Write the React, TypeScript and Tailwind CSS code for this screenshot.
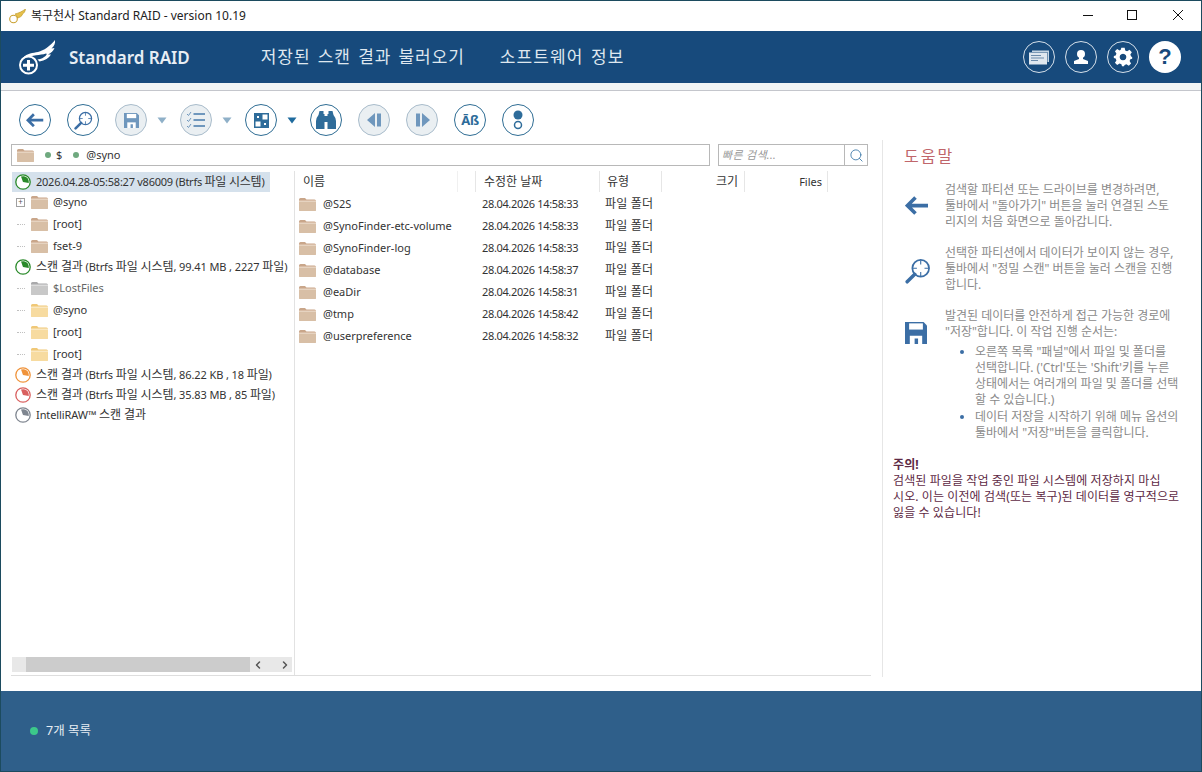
import React from "react";
import { Search, ChevronLeft, ChevronRight } from "lucide-react";

const font = { fontFamily: '"Noto Sans", "Noto Sans CJK KR", sans-serif' };

// hangul runs sit a little larger than the latin around them
const K = ({ children }: { children: React.ReactNode }) => (
  <span className="text-[12px]">{children}</span>
);

const Folder = ({ tone = "brown" }: { tone?: "brown" | "yellow" | "grey" }) => {
  const colors = {
    brown: ["#d8bfa6", "#c9a68a", "#e6d3c0"],
    yellow: ["#f7dba0", "#f0c877", "#fae8c2"],
    grey: ["#c8c8c8", "#a9a9ab", "#dcdcdc"],
  }[tone];
  return (
    <svg width="17" height="14" viewBox="0 0 17 14" className="shrink-0">
      <path d="M0 2.5Q0 1 1.5 1H6L7.5 2.5H15.5Q17 2.5 17 4V12.5Q17 14 15.5 14H1.5Q0 14 0 12.5Z" fill={colors[1]} />
      <path d="M0 4.5H17V12.5Q17 14 15.5 14H1.5Q0 14 0 12.5Z" fill={colors[0]} />
      <path d="M0 3.5H17V5H0Z" fill={colors[2]} />
    </svg>
  );
};

const Pie = ({ color }: { color: string }) => (
  <svg width="16" height="16" viewBox="0 0 16 16" className="shrink-0">
    <circle cx="8" cy="8" r="7.2" fill="#fff" stroke={color} strokeWidth="1.3" />
    <path d="M8 8L6 2.55A5.8 5.8 0 0 1 13.7 9Z" fill={color} />
  </svg>
);

const TreeFolder = ({ label, tone, expand }: { label: string; tone?: "brown" | "yellow" | "grey"; expand?: boolean }) => (
  <div className="h-[22px] flex items-center">
    {expand ? (
      <span className="ml-[4px] mr-[1px] w-[9px] h-[9px] border border-[#a0a0a0] flex items-center justify-center text-[8px] leading-none text-[#555555] shrink-0">+</span>
    ) : (
      <span className="ml-[5px] mr-[1px] w-[8px] shrink-0 border-t border-dotted border-[#c0c0c0]" />
    )}
    <span className="ml-[5px]"><Folder tone={tone} /></span>
    <span className={`ml-[5px] ${tone === "grey" ? "text-[#666666]" : "text-[#333333]"}`}>{label}</span>
  </div>
);

const ScanRow = ({ color, children }: { color: string; children: React.ReactNode }) => (
  <div className="h-[20px] flex items-center pl-[3px] whitespace-nowrap text-[#333333]">
    <Pie color={color} />
    <span className="ml-[5px] tracking-[-0.1px]">{children}</span>
  </div>
);

// toolbar button: white circle with a blue ring, greyed when the action is off
const ToolBtn = ({ off, children }: { off?: boolean; children: React.ReactNode }) => (
  <div
    className={`w-[32px] h-[32px] rounded-full border-[1.5px] flex items-center justify-center shrink-0 ${
      off ? "border-[#a9bccb] bg-[#eaeff2]" : "border-[#2f6d94] bg-white"
    }`}
  >
    {children}
  </div>
);

const Caret = ({ off }: { off?: boolean }) => (
  <svg width="10" height="7" viewBox="0 0 10 7" className="shrink-0 mx-[10px]">
    <path d="M0.5 0.5H9.5L5 6.5Z" fill={off ? "#8fb0c8" : "#1f6b9e"} />
  </svg>
);

const BackArrow = ({ size = 18 }: { size?: number }) => (
  <svg width={size} height={size * 0.8} viewBox="0 0 24 19">
    <path d="M10.5 1.5L2.5 9.5L10.5 17.5M3.5 9.5H23" fill="none" stroke="#3b6ea5" strokeWidth="3.6" strokeLinejoin="miter" />
  </svg>
);

const Magnifier = ({ size = 20, color = "#3b6ea5" }: { size?: number; color?: string }) => (
  <svg width={size} height={size} viewBox="0 0 24 24">
    <circle cx="14.5" cy="9.5" r="7.7" fill="#fff" stroke={color} strokeWidth="1.6" />
    <path d="M14.5 2V6M14.5 13V17M7 9.5H11M18 9.5H22" stroke={color} strokeWidth="1" />
    <path d="M9 15L2 22" stroke={color} strokeWidth="3.2" strokeLinecap="round" />
  </svg>
);

const Floppy = ({ size = 16, color = "#6f97bd" }: { size?: number; color?: string }) => (
  <svg width={size} height={size} viewBox="0 0 16 16">
    <path d="M0 0H13.5L16 2.5V16H0Z" fill={color} />
    <rect x="3" y="1" width="10" height="4.5" fill="#fff" />
    <rect x="3.5" y="10" width="9" height="6" fill="#fff" />
    <rect x="7" y="12" width="2.5" height="4" fill={color} />
  </svg>
);

const Wing = () => (
  <svg width="38" height="35" viewBox="0 0 38 35" className="shrink-0">
    <path
      d="M5 18C9 13 15 13 20 12C26 10.500 32 6 37 0C37.500 3.500 36 6.500 33.500 8.500L36.500 8C35.500 11 33 13 30 14.500L33 14.500C31 18 27 20.500 21.500 21.500L19.500 19.500C23 19 26 17.500 27.500 16C29 14.500 29 13.500 28 13.500C22 15.500 14 14.500 8 18.500Z"
      fill="#fff"
    />
    <circle cx="10.500" cy="25" r="8.500" fill="#174a7c" stroke="#fff" strokeWidth="2" />
    <path d="M10.500 20V30.500M5 25.200H16" stroke="#fff" strokeWidth="3" />
  </svg>
);

const folders = [
  ["@S2S", "28.04.2026 14:58:33"],
  ["@SynoFinder-etc-volume", "28.04.2026 14:58:33"],
  ["@SynoFinder-log", "28.04.2026 14:58:33"],
  ["@database", "28.04.2026 14:58:37"],
  ["@eaDir", "28.04.2026 14:58:31"],
  ["@tmp", "28.04.2026 14:58:42"],
  ["@userpreference", "28.04.2026 14:58:32"],
];

const HelpBlock = ({ icon, top, children }: { icon: React.ReactNode; top: string; children: React.ReactNode }) => (
  <div className="flex">
    <div className={`w-[52px] shrink-0 pl-[12px] ${top}`}>{icon}</div>
    <div className="flex-1 min-w-0 whitespace-nowrap">{children}</div>
  </div>
);

export default function App() {
  return (
    <div style={font} className="w-[1202px] h-[772px] flex flex-col bg-white border border-[#1c4b5f] overflow-hidden text-[11px] leading-[16px]">
      {/* title bar */}
      <div className="h-[30px] shrink-0 flex items-center bg-white">
        <svg width="17" height="15" viewBox="0 0 17 15" className="ml-[8px] shrink-0">
          <path d="M6 5C10 4 13 2.500 16.500 0C16 3 15 4 13.500 5C13.500 7 10 9 8 9C8 7 7 5.500 6 5Z" fill="#e6c04a" stroke="#b89323" strokeWidth="0.6" />
          <circle cx="4.500" cy="10" r="3.800" fill="#fff" stroke="#c9a02e" strokeWidth="1.100" />
        </svg>
        <span className="ml-[5px] text-[12px] text-[#222222]">복구천사 Standard RAID - version 10.19</span>
        <div className="ml-auto mb-[2px] flex items-center">
          <svg width="10" height="10" viewBox="0 0 10 10" className="mr-[34px]"><path d="M0 5.500H10" stroke="#111111" /></svg>
          <svg width="10" height="10" viewBox="0 0 10 10" className="mr-[36px]"><rect x="0.500" y="0.500" width="9" height="9" fill="none" stroke="#111111" /></svg>
          <svg width="10" height="10" viewBox="0 0 10 10" className="mr-[18px]"><path d="M0 0L10 10M10 0L0 10" stroke="#111111" /></svg>
        </div>
      </div>

      {/* app header */}
      <div className="h-[52px] shrink-0 bg-[#174a7c] flex items-center text-white">
        <div className="ml-[17px]"><Wing /></div>
        <span className="ml-[13px] mt-[1px] text-[17px] font-semibold text-[#e8eef4]">Standard RAID</span>
        <span className="ml-[71px] text-[17px] tracking-[0.9px] [word-spacing:2px] text-[#dfe7ef]">저장된 스캔 결과 불러오기</span>
        <span className="ml-[35px] text-[17px] tracking-[1.1px] [word-spacing:2px] text-[#dfe7ef]">소프트웨어 정보</span>
        <div className="ml-auto mr-[20px] flex items-center gap-[10px]">
          <div className="w-[32px] h-[32px] rounded-full border border-[#d5e0ea] flex items-center justify-center">
            <svg width="20" height="15" viewBox="0 0 20 15">
              <path d="M3 0.500H20V12H18.500V2H3Z" fill="#c5d5e4" />
              <rect x="0" y="2.500" width="18" height="12" fill="#dfe7ef" />
              <path d="M2 5.500H12M2 8H15M2 10.500H9" stroke="#6c8bab" strokeWidth="1.100" />
            </svg>
          </div>
          <div className="w-[32px] h-[32px] rounded-full border border-[#d5e0ea] flex items-center justify-center">
            <svg width="16" height="16" viewBox="0 0 16 16">
              <circle cx="8" cy="5" r="4" fill="#fff" />
              <path d="M6 8H10V10L15 12V15H1V12L6 10Z" fill="#fff" />
            </svg>
          </div>
          <div className="w-[32px] h-[32px] rounded-full border border-[#d5e0ea] flex items-center justify-center">
            <svg width="20" height="20" viewBox="0 0 24 24">
              <path fill="#fff" fillRule="evenodd" d="M10 1H14L14.700 4.300L16.900 5.200L19.800 3.400L22.600 6.200L20.800 9.100L21.700 11.300L23 12V14L20.800 14.700L19.900 16.900L21.700 19.800L19 22.500L16.100 20.700L13.900 21.600L13.200 23H10.800L10.100 20.800L7.900 19.900L5 21.700L2.300 19L4.100 16.100L3.200 13.900L1 13.200V10.800L3.200 10.100L4.100 7.900L2.300 5L5 2.300L7.900 4.100L9.300 3.400ZM12 8A4 4 0 1 0 12.010 8Z" />
            </svg>
          </div>
          <div className="w-[32px] h-[32px] rounded-full bg-white flex items-center justify-center text-[#174a7c] text-[22px] font-bold leading-none" style={{ fontFamily: '"Liberation Sans", sans-serif' }}>?</div>
        </div>
      </div>
      <div className="h-[8px] shrink-0 bg-[#f0f4f5] border-b border-[#c4c6cc]" />

      {/* workspace */}
      <div className="flex-1 min-h-0 flex">
        <div className="w-[870px] shrink-0 flex flex-col pl-[10px]">
          {/* toolbar */}
          <div className="h-[53px] shrink-0 flex items-center pl-[8px] pt-[5px]">
            <ToolBtn><BackArrow size={18} /></ToolBtn>
            <span className="w-[16px]" />
            <ToolBtn><Magnifier size={19} /></ToolBtn>
            <span className="w-[16px]" />
            <ToolBtn off><Floppy size={15} /></ToolBtn>
            <Caret off />
            <span className="w-[3px]" />
            <ToolBtn off>
              <svg width="20" height="18" viewBox="0 0 20 18">
                <path d="M7.500 3H19M7.500 9H19M7.500 15H19" stroke="#6f97bd" strokeWidth="1.800" />
                <path d="M1 3L2.500 4.500L5 1M1 9L2.500 10.500L5 7M1 15L2.500 16.500L5 13" stroke="#6f97bd" strokeWidth="1" fill="none" />
              </svg>
            </ToolBtn>
            <Caret off />
            <span className="w-[3px]" />
            <ToolBtn>
              <svg width="15" height="15" viewBox="0 0 15 15">
                <rect x="0" y="0" width="15" height="15" fill="#2e6c9a" />
                <rect x="8.500" y="1.500" width="5" height="5" fill="#fff" />
                <rect x="1.500" y="8.500" width="5" height="5" fill="#fff" />
                <rect x="3" y="3" width="2" height="2" fill="#fff" />
                <rect x="10" y="10" width="2" height="2" fill="#fff" />
              </svg>
            </ToolBtn>
            <Caret />
            <span className="w-[3px]" />
            <ToolBtn>
              <svg width="22" height="20" viewBox="0 0 22 20">
                <path d="M4.500 1H8.500V4H9.500V19H1V11Q1 8 3.500 5ZM17.500 1H13.500V4H12.500V19H21V11Q21 8 18.500 5Z" fill="#2e6c9a" />
                <rect x="9" y="6" width="4" height="6" fill="#2e6c9a" />
              </svg>
            </ToolBtn>
            <span className="w-[16px]" />
            <ToolBtn off>
              <svg width="15" height="14" viewBox="0 0 15 14"><path d="M8 0V14L0 7ZM10 0.500H14V13.500H10Z" fill="#6f97bd" /></svg>
            </ToolBtn>
            <span className="w-[16px]" />
            <ToolBtn off>
              <svg width="15" height="14" viewBox="0 0 15 14"><path d="M7 0V14L15 7ZM1 0.500H5V13.500H1Z" fill="#6f97bd" /></svg>
            </ToolBtn>
            <span className="w-[16px]" />
            <ToolBtn>
              <span className="text-[13px] font-bold text-[#2e6c9a] leading-none tracking-[-0.3px]">Āß</span>
            </ToolBtn>
            <span className="w-[16px]" />
            <ToolBtn>
              <svg width="10" height="20" viewBox="0 0 10 20">
                <circle cx="5" cy="5" r="4.500" fill="#2e6c9a" />
                <circle cx="5" cy="15" r="3.500" fill="#fff" stroke="#2e6c9a" strokeWidth="1.500" />
              </svg>
            </ToolBtn>
          </div>

          {/* path and quick search */}
          <div className="h-[22px] shrink-0 flex">
            <div className="w-[699px] border border-[#b8b8b8] flex items-center pl-[5px] text-[#333333]">
              <Folder />
              <span className="ml-[11px] w-[6px] h-[6px] rounded-full bg-[#6fa97f]" />
              <span className="ml-[5px]">$</span>
              <span className="ml-[11px] w-[6px] h-[6px] rounded-full bg-[#6fa97f]" />
              <span className="ml-[7px]">@syno</span>
            </div>
            <div className="ml-[8px] w-[150px] border border-[#b8b8b8] flex items-center">
              <span className="flex-1 pl-[3px] italic text-[#999999] text-[11px] tracking-[0.3px]">빠른 검색...</span>
              <span className="w-[23px] h-full border-l border-[#b8b8b8] flex items-center justify-center">
                <Search size={15} strokeWidth={1.400} className="text-[#3b78a8]" />
              </span>
            </div>
          </div>

          {/* tree and list */}
          <div className="flex-1 min-h-0 mt-[5px] flex border-b border-[#dedede]">
            <div className="w-[284px] shrink-0 border-r border-[#e2e2e2] flex flex-col">
              <div className="flex-1 min-h-0 pl-[1px] pt-[1px]">
                <div className="w-[258px] h-[20px] mb-[-1px] bg-[#d5e1ec] flex items-center pl-[3px] whitespace-nowrap text-[#333333]">
                  <Pie color="#2a8a2a" />
                  <span className="ml-[5px] tracking-[-0.25px]">2026.04.28-05:58:27 v86009 (Btrfs <K>파일 시스템</K>)</span>
                </div>
                <TreeFolder label="@syno" expand />
                <TreeFolder label="[root]" />
                <TreeFolder label="fset-9" />
                <ScanRow color="#2a8a2a"><K>스캔 결과</K> (Btrfs <K>파일 시스템</K>, 99.41 MB , 2227 <K>파일</K>)</ScanRow>
                <TreeFolder label="$LostFiles" tone="grey" />
                <TreeFolder label="@syno" tone="yellow" />
                <TreeFolder label="[root]" tone="yellow" />
                <TreeFolder label="[root]" tone="yellow" />
                <ScanRow color="#f0933a"><K>스캔 결과</K> (Btrfs <K>파일 시스템</K>, 86.22 KB , 18 <K>파일</K>)</ScanRow>
                <ScanRow color="#d9605f"><K>스캔 결과</K> (Btrfs <K>파일 시스템</K>, 35.83 MB , 85 <K>파일</K>)</ScanRow>
                <ScanRow color="#7f8690">IntelliRAW™ <K>스캔 결과</K></ScanRow>
              </div>
              <div className="h-[15px] mb-[3px] mr-[2px] ml-[1px] shrink-0 bg-[#e8e8e8] flex items-center">
                <div className="ml-[14px] w-[224px] h-full bg-[#cccccc]" />
                <ChevronLeft size={12} strokeWidth={3} className="ml-[2px] text-[#555555]" />
                <ChevronRight size={12} strokeWidth={3} className="ml-[15px] text-[#555555]" />
              </div>
            </div>

            <div className="flex-1 min-w-0 text-[#333333]">
              <div className="h-[21px] flex items-center">
                <div className="w-[181px] h-full pl-[8px] flex items-center border-r border-[#e6e6e6]">
                  <K>이름</K>
                  <span className="ml-auto mr-[17px] h-full w-px bg-[#f0f0f0]" />
                </div>
                <div className="w-[124px] h-full pl-[8px] flex items-center border-r border-[#e6e6e6]"><K>수정한 날짜</K></div>
                <div className="w-[62px] h-full pl-[7px] flex items-center border-r border-[#e6e6e6]"><K>유형</K></div>
                <div className="w-[83px] h-full pr-[6px] flex items-center justify-end border-r border-[#e6e6e6]"><K>크기</K></div>
                <div className="w-[83px] h-full pr-[5px] flex items-center justify-end border-r border-[#e6e6e6]">Files</div>
              </div>
              <div className="pt-[1px]">
                {folders.map(([name, date]) => (
                  <div key={name} className="h-[22px] flex items-center">
                    <div className="w-[181px] pl-[4px] flex items-center whitespace-nowrap">
                      <Folder />
                      <span className="ml-[7px]">{name}</span>
                    </div>
                    <div className="w-[124px] pl-[6px] tracking-[-0.35px]">{date}</div>
                    <div className="pl-[5px] tracking-[0.2px]"><K>파일 폴더</K></div>
                  </div>
                ))}
              </div>
            </div>
          </div>
          <div className="h-[15px] shrink-0" />
        </div>

        {/* help panel */}
        <div className="w-[319px] shrink-0 ml-[11px] mt-[49px] mb-[14px] border-l border-[#e6e6e6] pl-[10px] pr-[9px] text-[12px]">
          <div className="mt-[4px] ml-[11px] text-[16px] leading-[24px] tracking-[2px] text-[#c0666b]">도움말</div>
          <div className="mt-[14px] text-[#8a8a8a] flex flex-col gap-[15px]">
            <HelpBlock icon={<BackArrow size={24} />} top="pt-[14px]">
              검색할 파티션 또는 드라이브를 변경하려면,<br />
              툴바에서 "돌아가기" 버튼을 눌러 연결된 스토<br />
              리지의 처음 화면으로 돌아갑니다.
            </HelpBlock>
            <HelpBlock icon={<Magnifier size={26} />} top="pt-[13px]">
              선택한 파티션에서 데이터가 보이지 않는 경우,<br />
              툴바에서 "정밀 스캔" 버튼을 눌러 스캔을 진행<br />
              합니다.
            </HelpBlock>
            <HelpBlock icon={<Floppy size={22} color="#3b6ea5" />} top="pt-[14px]">
              발견된 데이터를 안전하게 접근 가능한 경로에<br />
              "저장"합니다. 이 작업 진행 순서는:
              <ul className="mt-[4px] pl-[30px] list-disc marker:text-[#3b6ea5]">
                <li className="mb-[1px]">
                  오른쪽 목록 "패널"에서 파일 및 폴더를<br />
                  선택합니다. ('Ctrl'또는 'Shift'키를 누른<br />
                  상태에서는 여러개의 파일 및 폴더를 선택<br />
                  할 수 있습니다.)
                </li>
                <li>
                  데이터 저장을 시작하기 위해 메뉴 옵션의<br />
                  툴바에서 "저장"버튼을 클릭합니다.
                </li>
              </ul>
            </HelpBlock>
          </div>
          <div className="mt-[16px] text-[#5e2a45] whitespace-nowrap tracking-[0.1px]">
            <div className="font-bold">주의!</div>
            검색된 파일을 작업 중인 파일 시스템에 저장하지 마십<br />
            시오. 이는 이전에 검색(또는 복구)된 데이터를 영구적으로<br />
            잃을 수 있습니다!
          </div>
        </div>
      </div>

      {/* status bar */}
      <div className="h-[80px] shrink-0 bg-[#2f5f8a] flex items-center pl-[29px] text-[#e6edf3]">
        <span className="w-[8px] h-[8px] rounded-full bg-[#3cc88a]" />
        <span className="ml-[8px] text-[12.5px]">7개 목록</span>
      </div>
    </div>
  );
}
